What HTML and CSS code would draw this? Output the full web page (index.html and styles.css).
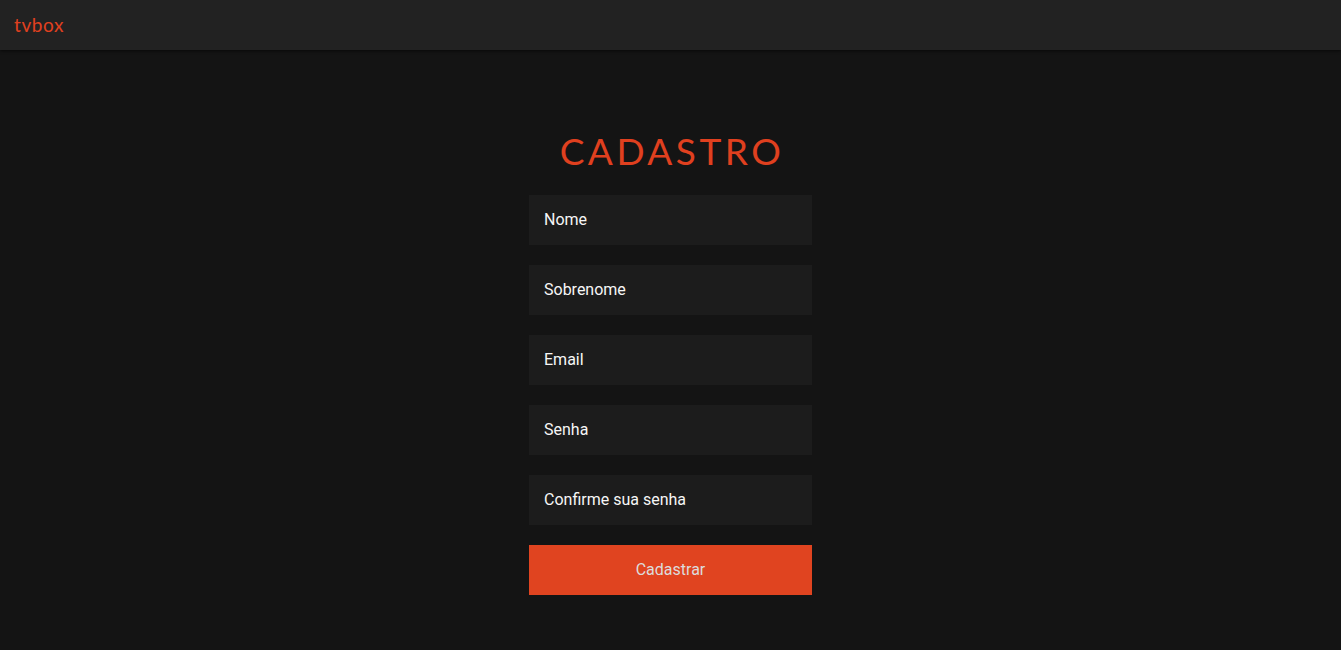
FILE: index.html
```html
<!DOCTYPE html>
<html lang="pt">
<head>
<meta charset="utf-8">
<title>tvbox - Cadastro</title>
<link rel="stylesheet" href="styles.css">
</head>
<body>
<header class="topbar">
  <a class="brand" href="#">tvbox</a>
</header>
<main class="main">
  <form class="form">
    <h1 class="title">CADASTRO</h1>
    <input class="field" type="text" placeholder="Nome">
    <input class="field" type="text" placeholder="Sobrenome">
    <input class="field" type="email" placeholder="Email">
    <input class="field" type="password" placeholder="Senha">
    <input class="field" type="password" placeholder="Confirme sua senha">
    <button class="submit" type="button">Cadastrar</button>
  </form>
</main>
</body>
</html>
```

FILE: styles.css
```css
html, body {
  margin: 0;
  padding: 0;
  background: #141414;
  height: 100%;
}
body {
  font-family: Roboto, "Liberation Sans", sans-serif;
}
.topbar {
  height: 50px;
  background: #222222;
  display: flex;
  align-items: center;
  padding-left: 14px;
  box-shadow: 0 1px 3px rgba(0,0,0,0.6);
  position: relative;
}
.brand {
  color: #e0401f;
  text-decoration: none;
  font-family: Lato, "Noto Sans", sans-serif;
  font-size: 19px;
  letter-spacing: 0.6px;
  margin-top: -1px;
}
.main {
  display: flex;
  justify-content: center;
}
.form {
  width: 283px;
  display: flex;
  flex-direction: column;
  align-items: stretch;
  gap: 20px;
  padding-top: 78px;
}
.title {
  margin: 0 0 1px;
  text-align: center;
  color: #e0401f;
  font-family: Lato, "Noto Sans", sans-serif;
  font-weight: 400;
  font-size: 37px;
  letter-spacing: 3.5px;
  line-height: 46px;
  padding-left: 3px;
}
.field {
  height: 50px;
  box-sizing: border-box;
  border: none;
  outline: none;
  background: #1c1c1c;
  padding: 0 15px 2px;
  font-family: Roboto, "Liberation Sans", sans-serif;
  font-size: 16px;
  color: #fff;
}
.field::placeholder {
  color: #f6f6f6;
  opacity: 1;
}
.submit {
  height: 50px;
  border: none;
  background: #e04420;
  color: #dcdcdc;
  font-family: Roboto, "Liberation Sans", sans-serif;
  font-size: 16px;
  font-weight: 400;
  cursor: pointer;
  padding-bottom: 2px;
}
```
